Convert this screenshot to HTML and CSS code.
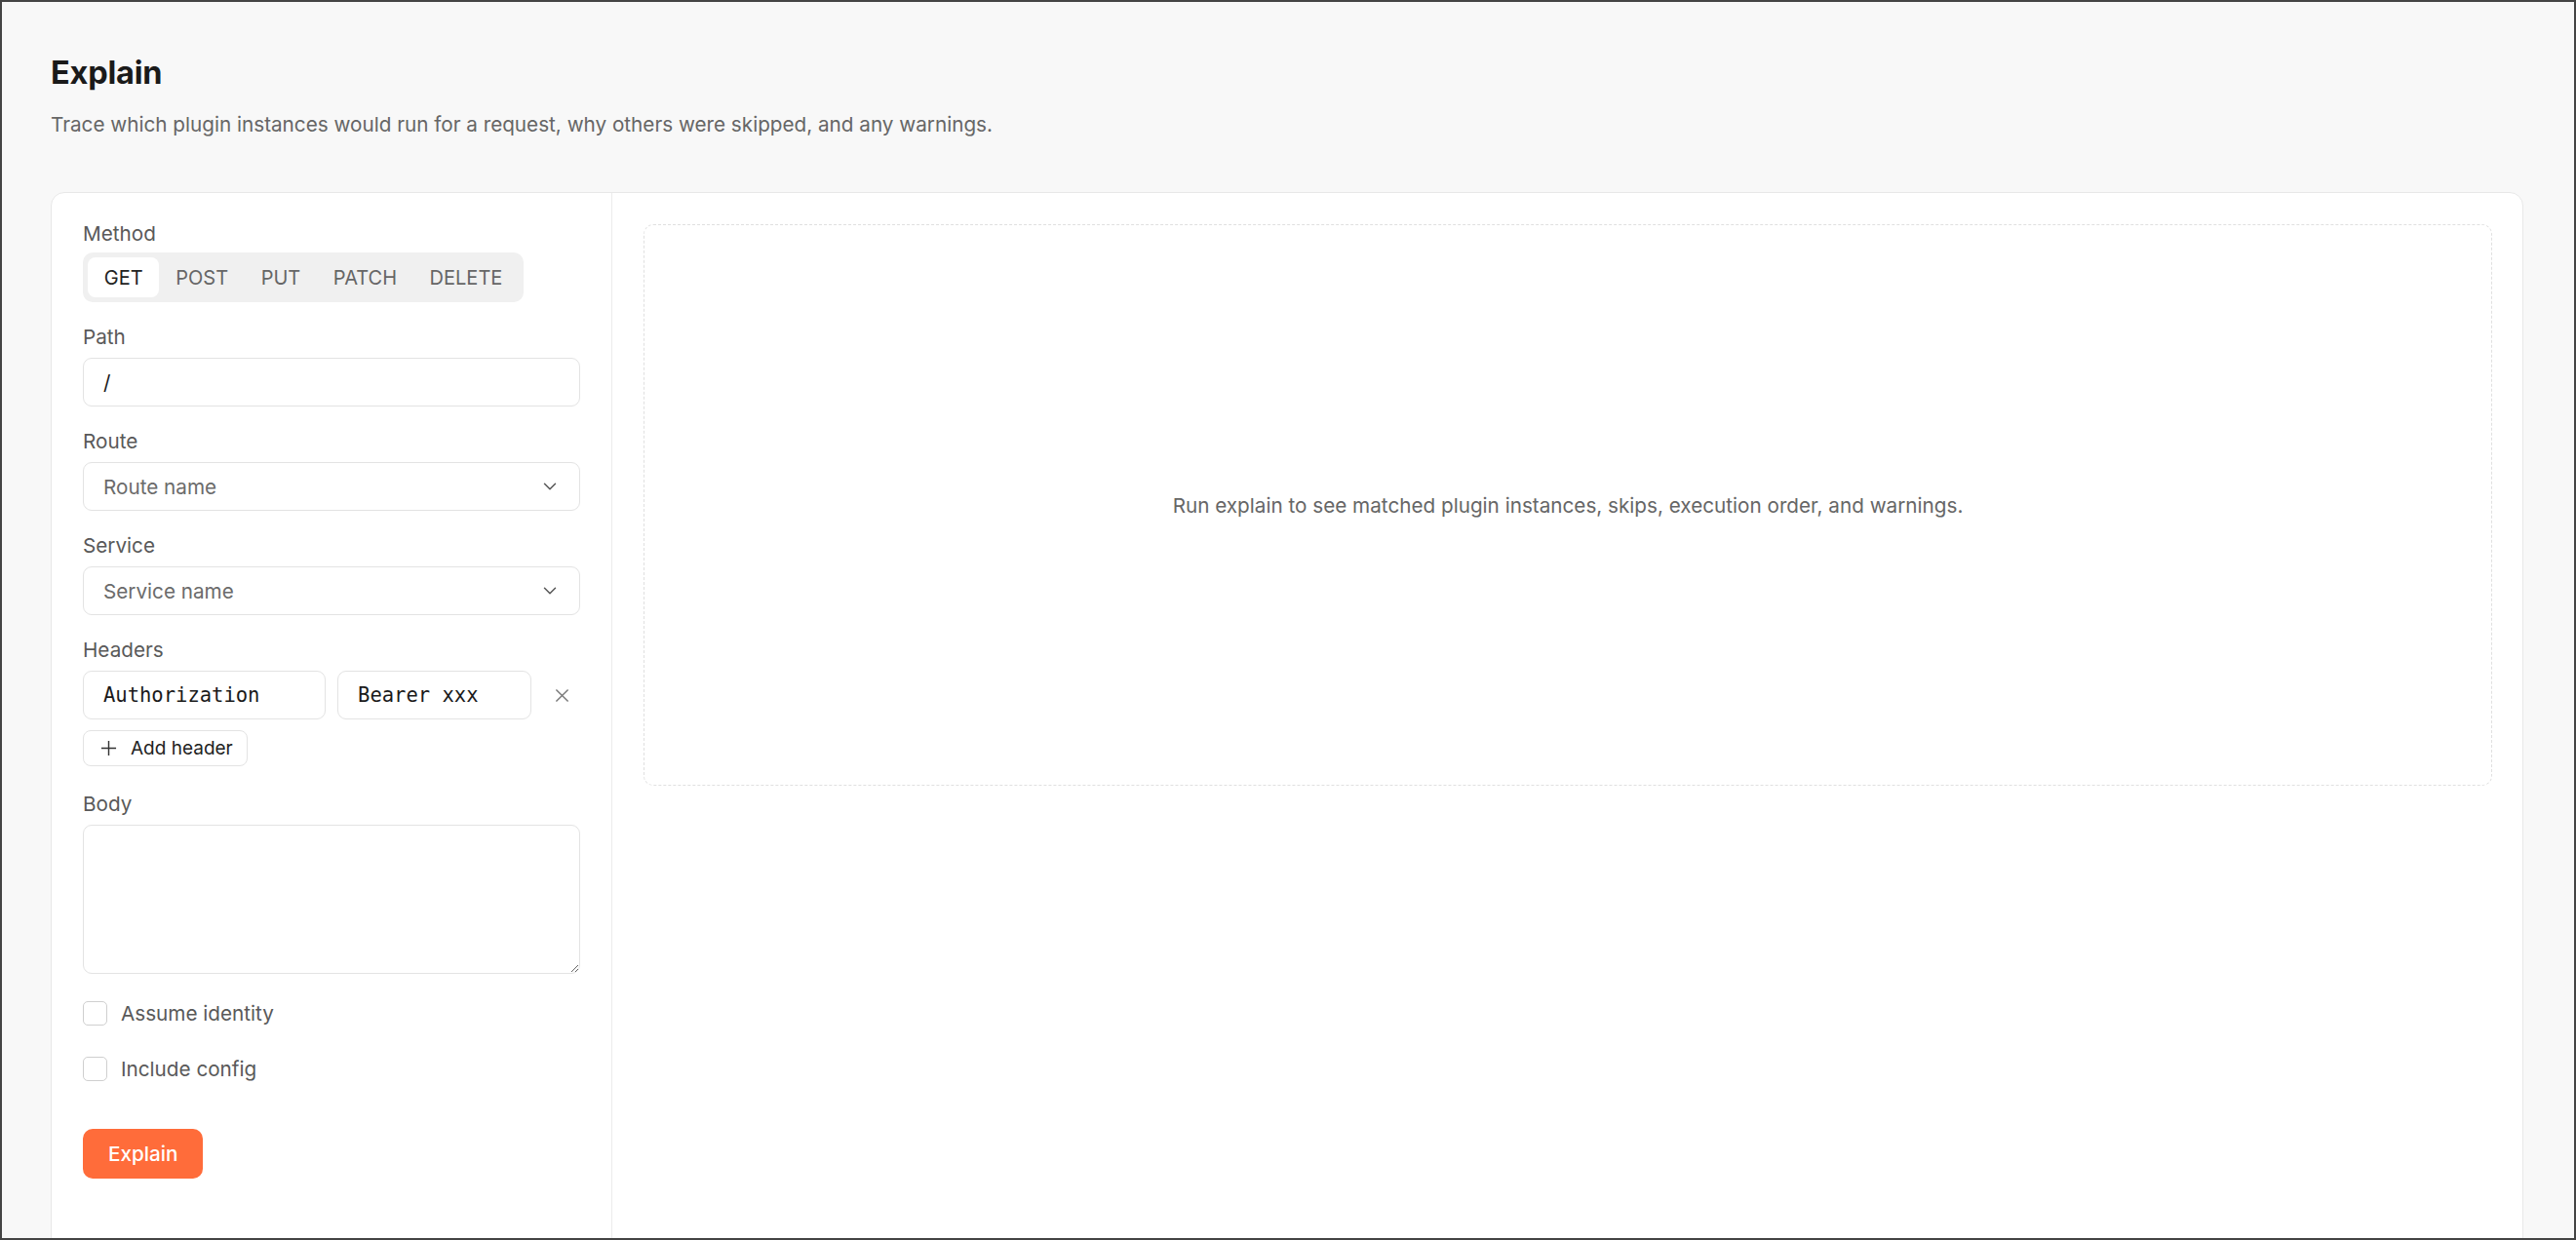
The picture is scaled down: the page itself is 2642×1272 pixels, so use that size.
FILE: index.html
```html
<!DOCTYPE html>
<html lang="en">
<head>
<meta charset="utf-8">
<title>Explain</title>
<link rel="stylesheet" href="styles.css">
</head>
<body>
<div class="frame">
  <main class="page">
    <header class="page-head">
      <h1 class="page-title">Explain</h1>
      <p class="page-sub">Trace which plugin instances would run for a request, why others were skipped, and any warnings.</p>
    </header>

    <section class="card">
      <form class="form-panel" onsubmit="return false">
        <div class="field field-method">
          <span class="label">Method</span>
          <div class="segmented">
            <button type="button" class="seg is-active">GET</button>
            <button type="button" class="seg">POST</button>
            <button type="button" class="seg">PUT</button>
            <button type="button" class="seg">PATCH</button>
            <button type="button" class="seg">DELETE</button>
          </div>
        </div>

        <label class="field">
          <span class="label">Path</span>
          <input class="control" type="text" value="/">
        </label>

        <div class="field">
          <span class="label">Route</span>
          <button type="button" class="control select">
            <span class="placeholder">Route name</span>
            <svg class="chevron" viewBox="0 0 24 24" width="22" height="22"><path d="M6 9l6 6 6-6"/></svg>
          </button>
        </div>

        <div class="field">
          <span class="label">Service</span>
          <button type="button" class="control select">
            <span class="placeholder">Service name</span>
            <svg class="chevron" viewBox="0 0 24 24" width="22" height="22"><path d="M6 9l6 6 6-6"/></svg>
          </button>
        </div>

        <div class="field">
          <span class="label">Headers</span>
          <div class="header-row">
            <input class="control mono" type="text" value="Authorization">
            <input class="control mono" type="text" value="Bearer xxx">
            <button type="button" class="icon-btn" aria-label="Remove header">
              <svg viewBox="0 0 16 16" width="16" height="16"><path d="M1.5 1.5l13 13M14.5 1.5l-13 13"/></svg>
            </button>
          </div>
          <button type="button" class="add-btn">
            <svg viewBox="0 0 18 18" width="18" height="18"><path d="M9 1v16M1 9h16"/></svg>
            <span>Add header</span>
          </button>
        </div>

        <label class="field field-body">
          <span class="label">Body</span>
          <textarea class="control textarea"></textarea>
        </label>

        <label class="check">
          <input type="checkbox">
          <span>Assume identity</span>
        </label>
        <label class="check">
          <input type="checkbox">
          <span>Include config</span>
        </label>

        <div class="actions">
          <button type="submit" class="primary">Explain</button>
        </div>
      </form>

      <div class="result-panel">
        <div class="empty">Run explain to see matched plugin instances, skips, execution order, and warnings.</div>
      </div>
    </section>
  </main>
</div>
</body>
</html>
```

FILE: styles.css
```css
* { box-sizing: border-box; }

html, body {
  margin: 0;
  padding: 0;
  height: 100%;
}

body {
  font-family: Inter, "Noto Sans", "Liberation Sans", sans-serif;
  color: #1a1a1a;
  background: #444;
}

.frame {
  height: 100vh;
  border: 2px solid #444;
  background: #f8f8f8;
  overflow: hidden;
}

.page {
  padding: 52px 52px 0 50px;
}

/* heading */
.page-title {
  margin: 0;
  font-size: 32.5px;
  line-height: 41px;
  font-weight: 700;
  color: #1a1a1a;
  letter-spacing: -0.2px;
}

.page-sub {
  margin: 17px 0 0;
  font-size: 20.7px;
  line-height: 31px;
  color: #666;
}

/* card */
.card {
  margin-top: 54px;
  display: grid;
  grid-template-columns: 575px 1fr;
  min-height: 1120px;
  background: #fff;
  border: 1px solid #e8e8e8;
  border-radius: 14px;
}

.form-panel {
  display: flex;
  flex-direction: column;
  gap: 23px;
  padding: 29px 32px 30px 32px;
  border-right: 1px solid #ececec;
}

.field {
  display: flex;
  flex-direction: column;
}

.label {
  font-size: 20.7px;
  line-height: 25px;
  color: #595959;
  margin-bottom: 9px;
}

.field-method .label { margin-bottom: 7px; }

/* method switcher */
.segmented {
  align-self: flex-start;
  display: flex;
  padding: 5px;
  background: #f0f0f0;
  border-radius: 10px;
}

.seg {
  height: 41px;
  padding: 0 16.8px;
  border: 0;
  border-radius: 8px;
  background: transparent;
  font-family: inherit;
  font-weight: 400;
  font-size: 20px;
  color: #666;
  cursor: pointer;
}

.seg.is-active {
  background: #fff;
  color: #222;
}

/* inputs */
.control {
  height: 50px;
  width: 100%;
  padding: 0 20px;
  border: 1px solid #e3e3e3;
  border-radius: 9px;
  background: #fff;
  font-family: inherit;
  font-size: 20.7px;
  color: #1a1a1a;
  outline: none;
}

.select {
  display: flex;
  align-items: center;
  justify-content: space-between;
  padding-right: 19px;
  text-align: left;
  cursor: pointer;
}

.placeholder { color: #6b6b6b; }

.chevron {
  fill: none;
  stroke: #555;
  stroke-width: 1.6;
  stroke-linecap: round;
  stroke-linejoin: round;
}

.mono {
  font-family: "DejaVu Sans Mono", "Liberation Mono", monospace;
  font-size: 20.5px;
}

.header-row {
  display: grid;
  grid-template-columns: 248fr 198fr 38px;
  gap: 12.5px;
  align-items: center;
}

.icon-btn {
  height: 38px;
  padding: 0;
  border: 0;
  background: transparent;
  display: flex;
  align-items: center;
  justify-content: center;
  cursor: pointer;
}

.icon-btn svg {
  width: 15px;
  height: 15px;
  fill: none;
  stroke: #777;
  stroke-width: 1.5;
}

.add-btn {
  align-self: flex-start;
  margin-top: 11px;
  height: 37px;
  display: flex;
  align-items: center;
  gap: 14px;
  padding: 0 14px 0 17px;
  border: 1px solid #e3e3e3;
  border-radius: 8px;
  background: #fff;
  font-family: inherit;
  font-size: 19px;
  color: #222;
  cursor: pointer;
}

.add-btn svg {
  width: 17px;
  height: 17px;
  fill: none;
  stroke: #333;
  stroke-width: 1.5;
}

.field-body { margin-top: 3px; }

.textarea {
  height: 153px;
  padding: 14px 20px;
  resize: vertical;
}

/* checkboxes */
.check {
  display: flex;
  align-items: center;
  gap: 14px;
  height: 34px;
  font-size: 20.7px;
  color: #595959;
  cursor: pointer;
}

.form-panel > .check:first-of-type { margin-top: 3px; }

.check input {
  appearance: none;
  -webkit-appearance: none;
  margin: 0;
  width: 25px;
  height: 25px;
  border: 1.5px solid #cfcfcf;
  border-radius: 5px;
  background: #fff;
}

.actions { margin-top: 22px; }

.primary {
  height: 51px;
  padding: 0 26px;
  border: 0;
  border-radius: 10px;
  background: #ff6c3a;
  color: #fff;
  font-family: inherit;
  font-size: 20.7px;
  font-weight: 500;
  cursor: pointer;
}

/* results */
.result-panel {
  padding: 32px 31px 32px 32px;
}

.empty {
  height: 576px;
  display: flex;
  align-items: center;
  justify-content: center;
  border: 1.5px dashed #e0e0e0;
  border-radius: 10px;
  font-size: 20.7px;
  color: #666;
}
```
